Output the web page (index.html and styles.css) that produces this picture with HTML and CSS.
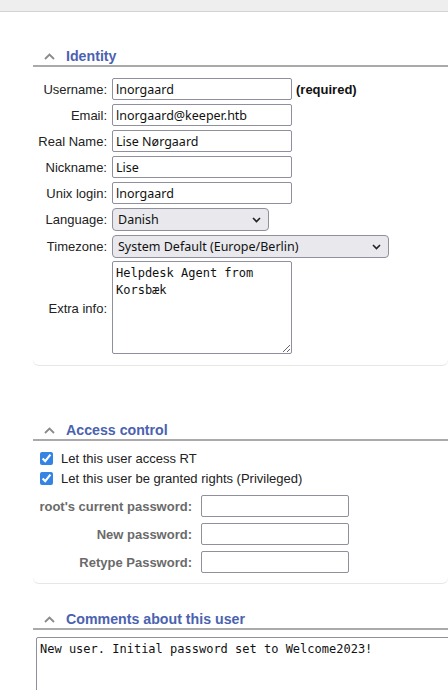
FILE: index.html
```html
<!DOCTYPE html>
<html>
<head>
<meta charset="utf-8">
<title>User</title>
<link rel="stylesheet" href="styles.css">
</head>
<body>
<div class="topbar"></div>

<section class="card card-identity">
  <div class="titlebox">
    <svg class="chev" width="11" height="7" viewBox="0 0 11 7"><polyline points="1,6 5.5,1.5 10,6" fill="none" stroke="#8a8a8a" stroke-width="1.8"/></svg>
    <span class="title">Identity</span>
  </div>
  <div class="form-grid">
    <label class="lbl">Username:</label>
    <div class="val"><input class="txt" type="text" value="lnorgaard"><b class="req">(required)</b></div>
    <label class="lbl">Email:</label>
    <div class="val"><input class="txt" type="text" value="lnorgaard@keeper.htb"></div>
    <label class="lbl">Real Name:</label>
    <div class="val"><input class="txt" type="text" value="Lise Nørgaard"></div>
    <label class="lbl">Nickname:</label>
    <div class="val"><input class="txt" type="text" value="Lise"></div>
    <label class="lbl">Unix login:</label>
    <div class="val"><input class="txt" type="text" value="lnorgaard"></div>
    <label class="lbl">Language:</label>
    <div class="val"><span class="sel sel-lang"><select><option>Danish</option></select><svg class="sel-chev" width="9" height="6" viewBox="0 0 9 6"><polyline points="1,1 4.5,4.5 8,1" fill="none" stroke="#222" stroke-width="1.6"/></svg></span></div>
    <label class="lbl">Timezone:</label>
    <div class="val"><span class="sel sel-tz"><select><option>System Default (Europe/Berlin)</option></select><svg class="sel-chev" width="9" height="6" viewBox="0 0 9 6"><polyline points="1,1 4.5,4.5 8,1" fill="none" stroke="#222" stroke-width="1.6"/></svg></span></div>
    <label class="lbl">Extra info:</label>
    <div class="val val-ta"><textarea class="extra">Helpdesk Agent from Korsbæk</textarea></div>
  </div>
</section>

<section class="card card-access">
  <div class="titlebox">
    <svg class="chev" width="11" height="7" viewBox="0 0 11 7"><polyline points="1,6 5.5,1.5 10,6" fill="none" stroke="#8a8a8a" stroke-width="1.8"/></svg>
    <span class="title">Access control</span>
  </div>
  <div class="checks">
    <label class="chk"><input type="checkbox" checked> Let this user access RT</label>
    <label class="chk"><input type="checkbox" checked> Let this user be granted rights (Privileged)</label>
  </div>
  <div class="pw-grid">
    <label class="pwlbl">root's current password:</label>
    <input class="pw" type="password">
    <label class="pwlbl">New password:</label>
    <input class="pw" type="password">
    <label class="pwlbl">Retype Password:</label>
    <input class="pw" type="password">
  </div>
</section>

<section class="comments">
  <div class="titlebox">
    <svg class="chev" width="11" height="7" viewBox="0 0 11 7"><polyline points="1,6 5.5,1.5 10,6" fill="none" stroke="#8a8a8a" stroke-width="1.8"/></svg>
    <span class="title">Comments about this user</span>
  </div>
  <textarea class="comment">New user. Initial password set to Welcome2023!</textarea>
</section>
</body>
</html>
```
FILE: styles.css
```css
html, body {
  margin: 0;
  padding: 0;
  background: #fff;
  overflow: hidden;
}
body {
  font-family: "Liberation Sans", Arial, sans-serif;
  font-size: 13px;
  color: #222;
  width: 448px;
}
.topbar {
  height: 11px;
  background: #eeeeee;
  border-bottom: 1px solid #d2d2d2;
}
.card {
  margin-left: 33px;
  border-radius: 0 0 6px 6px;
  box-shadow: 0 1px 0 0 #e6e6e6;
  padding-bottom: 10px;
}
.card-identity { margin-top: 35px; padding-bottom: 11px; }
.card-access { margin-top: 56px; }
.comments { margin-left: 33px; margin-top: 27px; }

.titlebox {
  display: flex;
  align-items: center;
  height: 18px;
  border-bottom: 2px solid #aaaaaa;
}
.chev {
  margin-left: 11px;
  margin-right: 11px;
  margin-top: 1px;
}
.title {
  font-size: 14.2px;
  font-weight: bold;
  color: #4a62b0;
  line-height: 18px;
}

.form-grid {
  display: grid;
  grid-template-columns: 74px auto;
  column-gap: 5px;
  row-gap: 4px;
  padding-top: 11px;
}
.lbl {
  text-align: right;
  align-self: center;
  color: #222;
}
.val { display: flex; align-items: center; }
.txt {
  box-sizing: border-box;
  width: 180px;
  height: 22px;
  margin: 0;
  border: 1px solid #8f8f9d;
  border-radius: 2px;
  padding: 0 3px;
  font-family: "Noto Sans", sans-serif;
  font-size: 12.5px;
  color: #111;
}
.req {
  margin-left: 4px;
  font-weight: bold;
  color: #111;
}
.sel { position: relative; display: inline-block; }
.sel select {
  appearance: none;
  -webkit-appearance: none;
  box-sizing: border-box;
  height: 23px;
  margin: 0;
  border: 1px solid #8f8f9d;
  border-radius: 4px;
  background: #e9e9ed;
  padding: 0 20px 0 5px;
  font-family: "Noto Sans", sans-serif;
  font-size: 12.5px;
  color: #111;
}
.sel-lang select { width: 157px; }
.sel-tz select { width: 277px; }
.sel-chev {
  position: absolute;
  right: 8px;
  top: 9px;
  pointer-events: none;
}
.val-ta { margin-top: -1px; }
.extra {
  box-sizing: border-box;
  width: 180px;
  height: 93px;
  margin: 0;
  border: 1px solid #8f8f9d;
  border-radius: 2px;
  padding: 3px 3px;
  font-family: "DejaVu Sans Mono", monospace;
  font-size: 12px;
  line-height: 17px;
  color: #111;
  resize: both;
}

.checks {
  display: flex;
  flex-direction: column;
  padding-top: 7px;
}
.chk {
  display: flex;
  align-items: center;
  height: 20px;
  color: #222;
}
.chk input {
  width: 13px;
  height: 13px;
  margin: 0 8px 0 7px;
  accent-color: #3584e4;
}
.pw-grid {
  display: grid;
  grid-template-columns: 159px 148px;
  column-gap: 9px;
  row-gap: 6px;
  padding-top: 7px;
}
.pwlbl {
  text-align: right;
  align-self: center;
  font-weight: bold;
  color: #6a6a6a;
}
.pw {
  box-sizing: border-box;
  width: 148px;
  height: 22px;
  margin: 0;
  border: 1px solid #8f8f9d;
  border-radius: 2px;
}
.comment {
  display: block;
  box-sizing: border-box;
  margin: 7px 0 0 3px;
  width: 440px;
  height: 80px;
  border: 1px solid #8f8f9d;
  border-radius: 2px;
  padding: 3px 3px;
  font-family: "DejaVu Sans Mono", monospace;
  font-size: 12px;
  line-height: 17px;
  color: #111;
  resize: none;
}
```
